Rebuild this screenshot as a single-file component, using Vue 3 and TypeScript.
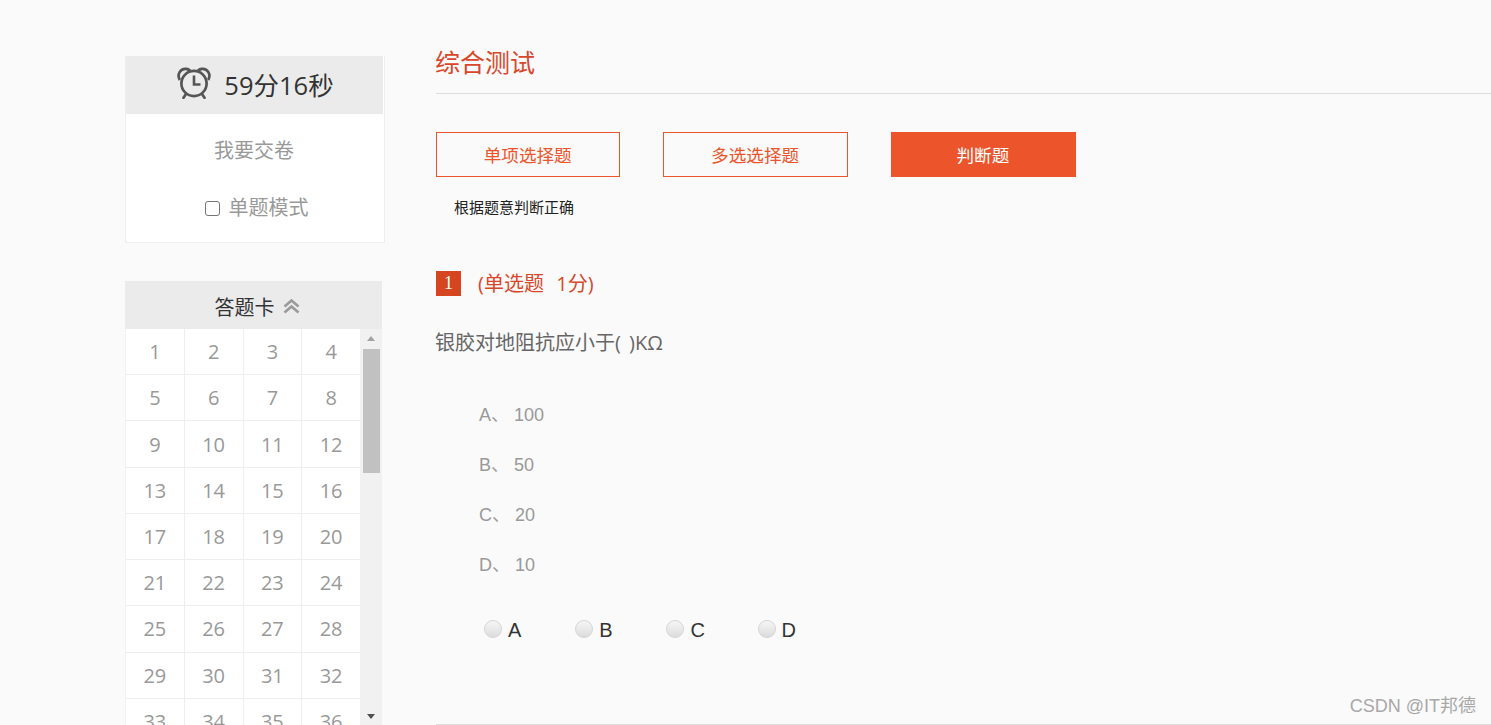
<script setup lang="ts">
const tabs = [
  { label: '单项选择题', active: false },
  { label: '多选选择题', active: false },
  { label: '判断题', active: true },
]
const numbers: number[] = Array.from({ length: 40 }, (_, i) => i + 1)
const options = [
  { key: 'A', text: '100' },
  { key: 'B', text: '50' },
  { key: 'C', text: '20' },
  { key: 'D', text: '10' },
]
</script>

<template>
  <div class="page">
    <aside class="side">
      <section class="timer-card">
        <div class="timer">
          <svg class="clock" width="34" height="32" viewBox="0 0 34 32" fill="none" stroke="#555" stroke-width="2.7">
            <circle cx="17" cy="16.5" r="12.6" />
            <path d="M17 8.5v9h6.5" stroke-width="2.6" />
            <path d="M2.8 13C-.4 7.500 3.500 1.300 9 1.900c2.300.2 3.900 1.400 4.700 2.900" />
            <path d="M31.200 13C34.400 7.500 30.500 1.300 25 1.900c-2.300.2-3.900 1.400-4.700 2.900" />
            <path d="M9 27l-2.500 3.800M25 27l2.500 3.800" stroke-linecap="round" />
          </svg>
          <span>59分16秒</span>
        </div>
        <div class="submit">我要交卷</div>
        <label class="mode"><span class="check"></span>单题模式</label>
      </section>

      <section class="answer-card">
        <div class="answer-head">答题卡
          <svg width="17" height="15" viewBox="0 0 17 15" fill="none" stroke="#9a9a9a" stroke-width="2.6">
            <path d="M1.500 7.500 8.500 1.500l7 6" />
            <path d="M1.500 13.500 8.500 7.500l7 6" />
          </svg>
        </div>
        <div class="answer-body">
          <div class="grid">
            <div v-for="n in numbers" :key="n" class="cell">{{ n }}</div>
          </div>
          <div class="scrollbar" aria-hidden="true">
            <i class="arrow up"></i>
            <b class="thumb"></b>
            <i class="arrow down"></i>
          </div>
        </div>
      </section>
    </aside>

    <main class="main">
      <h1 class="title">综合测试</h1>
      <div class="tabs">
        <button v-for="t in tabs" :key="t.label" class="tab" :class="{ active: t.active }">{{ t.label }}</button>
      </div>
      <p class="hint">根据题意判断正确</p>
      <div class="q-head"><span class="q-no">1</span><span class="q-type">(单选题&nbsp;&nbsp;1分)</span></div>
      <p class="q-text">银胶对地阻抗应小于( )KΩ</p>
      <ul class="opts">
        <li v-for="o in options" :key="o.key">{{ o.key }}、 {{ o.text }}</li>
      </ul>
      <div class="radios">
        <label v-for="o in options" :key="o.key" class="radio"><span class="dot"></span>{{ o.key }}</label>
      </div>
      <div class="bottom-line"></div>
    </main>
    <div class="mark">CSDN @IT邦德</div>
  </div>
</template>

<style>
html, body { margin: 0; background: #fafafa; }
</style>

<style scoped>
.page {
  position: relative;
  display: flex;
  height: 725px;
  overflow: hidden;
  padding-left: 125px;
  background: #fafafa;
  font-family: "Open Sans", "Noto Sans CJK SC", sans-serif;
  box-sizing: border-box;
}
.side { width: 260px; flex: none; padding-top: 56px; margin-right: 51px; }
.timer-card {
  height: 187px;
  box-sizing: border-box;
  background: #fff;
  border: 1px solid #eee;
  border-top: 0;
}
.timer {
  height: 58px;
  box-sizing: border-box;
  margin-right: 1px;
  background: #ebebeb;
  display: flex;
  align-items: center;
  justify-content: center;
  gap: 13px;
  font-size: 25.5px;
  line-height: 56px;
  color: #333;
  padding-left: 2px;
  padding-top: 1px;
}
.timer span { margin-top: -2px; }
.clock { margin-top: -5px; }
.submit {
  height: 72px;
  line-height: 74px;
  text-align: center;
  font-size: 20px;
  color: #999;
  padding-right: 2px;
}
.mode {
  display: flex;
  align-items: center;
  justify-content: center;
  gap: 9px;
  margin-top: 2px;
  padding-top: 5px;
  padding-left: 3px;
  font-size: 20px;
  color: #999;
  line-height: 30px;
}
.check {
  width: 15px;
  height: 15px;
  box-sizing: border-box;
  border: 1.5px solid #767676;
  border-radius: 3px;
  background: #fff;
}
.answer-card { width: 257px; margin-top: 38px; }
.answer-head {
  height: 48px;
  background: #ebebeb;
  display: flex;
  align-items: center;
  justify-content: center;
  gap: 8px;
  font-size: 20px;
  color: #333;
  padding-left: 7px;
  padding-top: 2px;
  box-sizing: border-box;
}
.answer-body { display: flex; height: 396px; background: #f1f1f1; }
.grid {
  width: 234px;
  margin-left: 1px;
  display: grid;
  grid-template-columns: repeat(4, 1fr);
  grid-auto-rows: 45.22px;
  gap: 1px;
  background: #eee;
  align-content: start;
  height: 396px;
  overflow: hidden;
  flex: none;
}
.cell {
  background: #fff;
  display: flex;
  align-items: center;
  justify-content: center;
  font-size: 20px;
  color: #999;
}
.scrollbar {
  position: relative;
  flex: 1;
  background: #f1f1f1;
  margin-left: 1px;
}
.thumb {
  position: absolute;
  left: 2px;
  top: 20px;
  width: 17px;
  height: 124px;
  background: #c1c1c1;
}
.arrow {
  position: absolute;
  left: 6px;
  width: 0;
  height: 0;
  border-left: 4.5px solid transparent;
  border-right: 4.5px solid transparent;
}
.arrow.up { top: 7px; border-bottom: 5px solid #a3a3a3; }
.arrow.down { top: 385px; border-top: 5px solid #505050; }
.main { flex: 1; min-width: 0; position: relative; }
.title {
  margin: 43px 0 0;
  height: 50px;
  line-height: 38px;
  font-size: 25px;
  font-weight: 400;
  color: #d9472b;
  border-bottom: 1px solid #ddd;
  text-indent: -1px;
}
.tabs { display: flex; gap: 43px; margin-top: 38px; }
.tab {
  width: 184.4px;
  height: 45px;
  box-sizing: border-box;
  padding: 0 1px 1px 0;
  border: 1px solid #ec552c;
  background: transparent;
  color: #ec552c;
  font: inherit;
  font-size: 17.6px;
}
.tab:last-child { width: 185.2px; }
.tab.active { background: #ec552c; color: #fff; }
.hint {
  margin: 20px 0 0 18px;
  line-height: 20px;
  font-size: 15px;
  color: #222;
}
.q-head { display: flex; align-items: center; margin-top: 54px; height: 25px; }
.q-no {
  width: 25px;
  height: 25px;
  background: #d5451f;
  color: #fff;
  text-align: center;
  font: 18px/25px "Liberation Serif", serif;
}
.q-type { margin-left: 17px; margin-top: -2px; font-size: 20px; color: #d9472b; word-spacing: 1px; }
.q-text {
  margin: 32px 0 0;
  line-height: 30px;
  font-size: 20px;
  color: #666;
  margin-left: -1px;
  word-spacing: 3px;
}
.opts {
  list-style: none;
  margin: 32px 0 0;
  padding: 0 0 0 43px;
  font-family: "Liberation Sans", "Noto Sans CJK SC", sans-serif;
  font-size: 18px;
  color: #999;
}
.opts li { height: 50px; line-height: 50px; }
.radios { display: flex; margin: 25px 0 0 48px; }
.radio {
  width: 91.2px;
  display: flex;
  align-items: center;
  gap: 6px;
  height: 30px;
  font-family: "Liberation Sans", sans-serif;
  font-size: 20px;
  color: #333;
}
.dot {
  width: 18px;
  height: 18px;
  box-sizing: border-box;
  border-radius: 50%;
  border: 1px solid #d5d5d5;
  background: linear-gradient(#f6f6f6, #dcdcdc);
  margin-top: -2px;
}
.bottom-line { margin-top: 79px; border-top: 1px solid #ddd; }
.mark {
  position: absolute;
  right: 15px;
  bottom: 7px;
  font-size: 18px;
  line-height: 24px;
  color: #a8a8a8;
  font-family: "Liberation Sans", "Noto Sans CJK SC", sans-serif;
}
</style>
